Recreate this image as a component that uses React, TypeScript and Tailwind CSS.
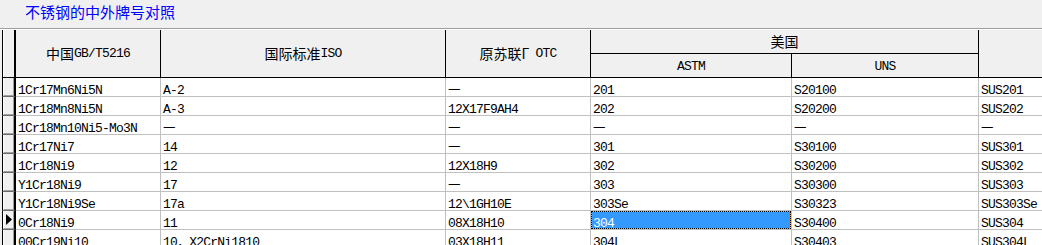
const mono = "font-[family-name:'Liberation_Mono','Noto_Sans_CJK_SC',monospace] text-[13px] tracking-[-0.8px]";
const cjk = "font-[family-name:'Noto_Sans_CJK_SC',sans-serif] text-[14px] tracking-normal";

const widths = ['w-[145px]', 'w-[285px]', 'w-[145px]', 'w-[201px]', 'w-[187px]', 'w-[100px]'];

const rows: string[][] = [
  ['1Cr17Mn6Ni5N', 'A-2', '—', '201', 'S20100', 'SUS201'],
  ['1Cr18Mn8Ni5N', 'A-3', '12X17F9AH4', '202', 'S20200', 'SUS202'],
  ['1Cr18Mn10Ni5-Mo3N', '—', '—', '—', '—', '—'],
  ['1Cr17Ni7', '14', '—', '301', 'S30100', 'SUS301'],
  ['1Cr18Ni9', '12', '12X18H9', '302', 'S30200', 'SUS302'],
  ['Y1Cr18Ni9', '17', '—', '303', 'S30300', 'SUS303'],
  ['Y1Cr18Ni9Se', '17a', '12\\1GH10E', '303Se', 'S30323', 'SUS303Se'],
  ['0Cr18Ni9', '11', '08X18H10', '304', 'S30400', 'SUS304'],
  ['00Cr19Ni10', '10，X2CrNi1810', '03X18H11', '304L', 'S30403', 'SUS304L'],
];

const CURRENT_ROW = 7;
const CURRENT_COL = 3;

function Indicator({ active }: { active: boolean }) {
  return (
    <div className="w-[14px] h-full shrink-0 border-l border-black border-r-2 border-r-black border-b border-b-[#696969] bg-[#f0f0f0]">
      <div className="h-full border-l border-white border-r border-r-[#a0a0a0] border-b border-b-[#a0a0a0] flex items-center">
        {active && (
          <svg width="6" height="11" viewBox="0 0 6 11" className="ml-[2px]">
            <path d="M0 0 L6 5.5 L0 11 Z" fill="#000" />
          </svg>
        )}
      </div>
    </div>
  );
}

function CellText({ value }: { value: string }) {
  // empty grades use a full-width dash from the CJK face
  if (value === '—') {
    return <span className={cjk + ' text-[12px] inline-block align-top leading-[12px]'}>—</span>;
  }
  return <span>{value}</span>;
}

function DataRow({ cells, index }: { cells: string[]; index: number }) {
  const active = index === CURRENT_ROW;
  return (
    <div className="flex h-[19px]">
      <Indicator active={active} />
      {cells.map((value, i) => {
        const focused = active && i === CURRENT_COL;
        const dash = value === '—';
        return (
          <div
            key={i}
            className={`${widths[i]} shrink-0 h-full border-r border-b border-[#c0c0c0] bg-white overflow-hidden`}
          >
            {focused ? (
              <div className="h-full bg-[#ff9933]">
                <div className="h-full border border-dotted border-black bg-[#3399ff] bg-clip-padding text-white pl-[1px] pt-[3px] leading-[17px] whitespace-nowrap">
                  <CellText value={value} />
                </div>
              </div>
            ) : (
              <div
                className={`h-full pl-[2px] ${dash ? 'pt-[3px]' : 'pt-[4px]'} leading-[17px] whitespace-nowrap text-black`}
              >
                <CellText value={value} />
              </div>
            )}
          </div>
        );
      })}
    </div>
  );
}

export default function App() {
  return (
    <div className={`w-[1042px] h-[245px] overflow-hidden bg-[#f0f0f0] ${mono}`}>
      <div className="h-[28px] pl-[25px] pt-[4px] font-[family-name:'Noto_Sans_CJK_SC',sans-serif] text-[15px] leading-[15px] tracking-normal text-[#0000ff]">
        不锈钢的中外牌号对照
      </div>
      <div className="h-px bg-[#a0a0a0]" />
      <div className="h-px bg-white" />

      <div className="ml-[2px] w-[1079px]">
        {/* fixed header rows */}
        <div className="grid grid-cols-[14px_145px_285px_145px_201px_187px_100px] grid-rows-[24px_24px] bg-[#f0f0f0] text-black">
          <div className="row-span-2 border-l border-black border-r-2 border-r-black border-b border-b-black">
            <div className="h-full border-l border-white" />
          </div>
          <div className="row-span-2 border-r border-b border-black flex items-center justify-center whitespace-nowrap">
            <span className={cjk}>中国</span>
            <span>GB/T5216</span>
          </div>
          <div className="row-span-2 border-r border-b border-black flex items-center justify-center whitespace-nowrap">
            <span className={cjk}>国际标准</span>
            <span>ISO</span>
          </div>
          <div className="row-span-2 border-r border-b border-black flex items-center justify-center whitespace-nowrap">
            <span className={cjk}>原苏联</span>
            <span className={cjk + ' inline-block w-[14px]'}>Γ</span>
            <span>OTC</span>
          </div>
          <div className="col-span-2 border-r border-b border-black flex items-center justify-center">
            <span className={cjk}>美国</span>
          </div>
          <div className="row-span-2 border-b border-black" />
          <div className="border-r border-b border-black flex items-center justify-center pt-[3px]">ASTM</div>
          <div className="border-r border-b border-black flex items-center justify-center pt-[3px]">UNS</div>
        </div>

        {rows.map((cells, i) => (
          <DataRow key={i} cells={cells} index={i} />
        ))}
      </div>
    </div>
  );
}
